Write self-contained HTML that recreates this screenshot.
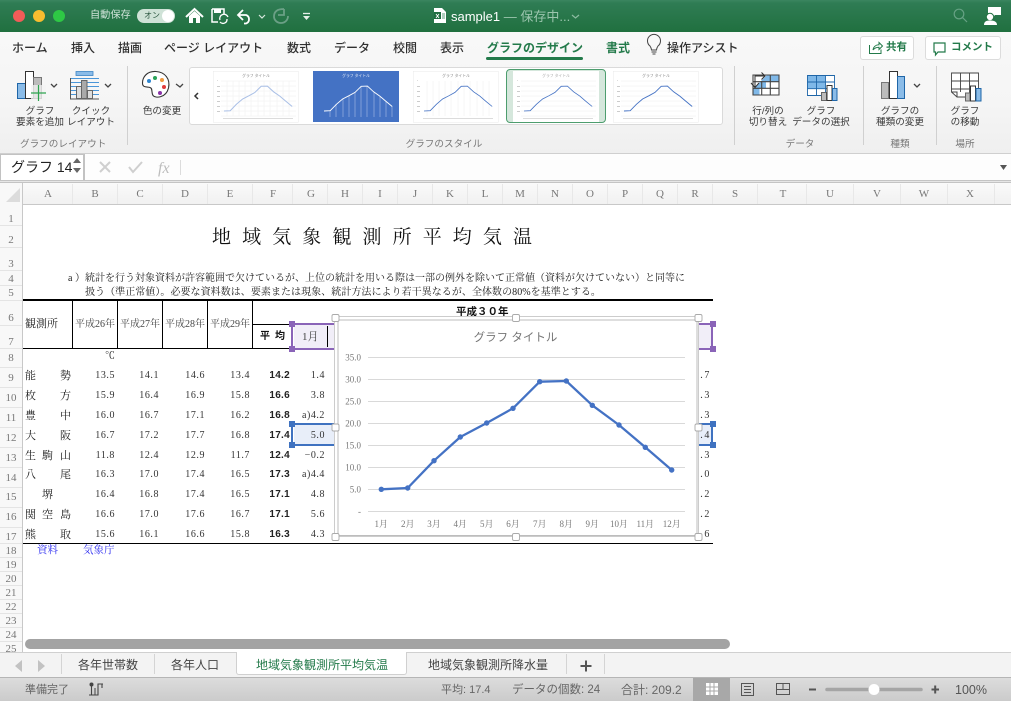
<!DOCTYPE html>
<html lang="ja"><head><meta charset="utf-8"><title>sample1</title>
<style>
*{box-sizing:border-box}
html,body{margin:0;padding:0;background:#fff}
#p{position:relative;width:1011px;height:701px;overflow:hidden;font-family:"Liberation Sans","Noto Sans CJK JP",sans-serif;color:#333}
#p div,#p span.a{position:absolute;white-space:nowrap}
.bg{left:0;width:1011px}
.t{top:40px;font-size:12px;line-height:17px;color:#303030;font-weight:500}
.l{font-size:9.6px;line-height:11.5px;text-align:center;color:#3a3a3a}
.g{top:139px;font-size:9.6px;line-height:12px;color:#777;text-align:center}
.ch{top:187px;height:14px;font:11px/14px "Liberation Serif","Noto Serif CJK SC",serif;color:#777;text-align:center;width:30px}
.rh{left:0;width:22px;height:14px;font:11px/14px "Liberation Serif","Noto Serif CJK SC",serif;color:#777;text-align:center}
.rl{left:0;width:22px;height:1px;background:#e4e4e4}
.s{font-family:"Liberation Serif","Noto Serif CJK SC",serif;color:#222}
.r{left:0;width:1011px;height:14px;font:10px/14px "Liberation Serif","Noto Serif CJK SC",serif;color:#333}
.r b,.r i,.r u{position:absolute;font-style:normal;font-weight:normal;text-decoration:none;top:0;text-align:right;letter-spacing:.55px}
.r u{font-size:11px;letter-spacing:0;color:#222}
.r b{font:bold 10px/14px "Liberation Sans",sans-serif;letter-spacing:.3px;right:721px;color:#222}
.c2{right:896px}.c3{right:852px}.c4{right:806px}.c5{right:761px}.c7{right:686px}
.r i.c8{right:300px;letter-spacing:1.6px}
.st{font-size:11.5px;line-height:14px;color:#666;top:683px}
.tb{top:658px;font-size:12px;line-height:15px;color:#444}
</style></head><body><div id="p">

<!-- title bar -->
<div class="bg" style="top:0;height:32px;background:linear-gradient(#3b8560 0,#2f7c54 3px,#20703f 100%)"></div>
<!-- ribbon -->
<div class="bg" style="top:32px;height:121px;background:linear-gradient(#f8f8f8,#f5f5f5 60%,#efefef)"></div>
<div class="bg" style="top:153px;height:1px;background:#cfcfcf"></div>
<!-- formula bar -->
<div class="bg" style="top:154px;height:27px;background:#fdfdfd"></div>
<div class="bg" style="top:180px;height:3px;background:#e6e6e6;border-top:1px solid #c4c4c4;border-bottom:1px solid #c4c4c4"></div>
<div style="left:0;top:154px;width:85px;height:26px;background:#fff;border:1px solid #c2c2c2;border-width:1px 2px 0 1px"></div>
<div style="left:11px;top:159px;font-size:14px;line-height:17px;color:#222">グラフ 14</div>
<!-- col header -->
<div class="bg" style="top:183px;height:22px;background:linear-gradient(#fafafa,#f1f1f1);border-bottom:1px solid #c8c8c8"></div>
<div style="left:0;top:183px;width:23px;height:469px;background:#f8f8f8;border-right:1px solid #c8c8c8"></div>

<!-- title bar text -->
<div style="left:90px;top:9px;font-size:10.2px;line-height:14px;color:#cfe3d8">自動保存</div>
<div style="left:137px;top:9px;width:38px;height:14px;border-radius:7px;background:#cfe2d7"></div>
<div style="left:144px;top:10px;font-size:8px;line-height:12px;color:#27543d">オン</div>
<div style="left:451px;top:8px;font-size:13px;line-height:17px;color:#fff">sample1<span style="color:#9cc5ae"> — 保存中...</span></div>

<!-- tabs -->
<div class="t" style="left:12px">ホーム</div>
<div class="t" style="left:71px">挿入</div>
<div class="t" style="left:118px">描画</div>
<div class="t" style="left:164px">ページ レイアウト</div>
<div class="t" style="left:287px">数式</div>
<div class="t" style="left:334px">データ</div>
<div class="t" style="left:393px">校閲</div>
<div class="t" style="left:440px">表示</div>
<div class="t" style="left:487px;color:#237a4a;font-weight:700">グラフのデザイン</div>
<div style="left:486px;top:57px;width:97px;height:3px;border-radius:2px;background:#237a4a"></div>
<div class="t" style="left:606px;color:#237a4a;font-weight:700">書式</div>
<div class="t" style="left:667px">操作アシスト</div>
<div style="left:860px;top:36px;width:54px;height:24px;background:#fff;border:1px solid #dcdcdc;border-radius:3px"></div>
<div style="left:925px;top:36px;width:76px;height:24px;background:#fff;border:1px solid #dcdcdc;border-radius:3px"></div>
<div style="left:886px;top:40px;font-size:10.5px;line-height:15px;font-weight:700;color:#237a4a">共有</div>
<div style="left:951px;top:40px;font-size:10.5px;line-height:15px;font-weight:700;color:#237a4a">コメント</div>

<!-- gallery -->
<div style="left:189px;top:67px;width:534px;height:58px;background:#fff;border:1px solid #dadada;border-radius:3px"></div>
<div style="left:506px;top:69px;width:100px;height:54px;background:#d5e7dc;border:1.5px solid #4d9d6e;border-radius:4px"></div>

<!-- ribbon labels -->
<div class="l" style="left:10px;top:105.500px;width:60px">グラフ<br>要素を追加</div>
<div class="l" style="left:60px;top:105.500px;width:62px">クイック<br>レイアウト</div>
<div class="l" style="left:132px;top:105.500px;width:60px">色の変更</div>
<div class="l" style="left:738px;top:105.500px;width:60px">行/列の<br>切り替え</div>
<div class="l" style="left:790px;top:105.500px;width:62px">グラフ<br>データの選択</div>
<div class="l" style="left:868px;top:105.500px;width:64px">グラフの<br>種類の変更</div>
<div class="l" style="left:940px;top:105.500px;width:50px">グラフ<br>の移動</div>
<div class="g" style="left:20px;width:70px">グラフのレイアウト</div>
<div class="g" style="left:404px;width:80px">グラフのスタイル</div>
<div class="g" style="left:785px;width:30px">データ</div>
<div class="g" style="left:885px;width:30px">種類</div>
<div class="g" style="left:950px;width:30px">場所</div>

<!-- column headers -->
<div class="ch" style="left:33px">A</div><div class="ch" style="left:80px">B</div><div class="ch" style="left:125px">C</div><div class="ch" style="left:170px">D</div><div class="ch" style="left:215px">E</div><div class="ch" style="left:258px">F</div><div class="ch" style="left:296px">G</div><div class="ch" style="left:330px">H</div><div class="ch" style="left:365px">I</div><div class="ch" style="left:400px">J</div><div class="ch" style="left:435px">K</div><div class="ch" style="left:470px">L</div><div class="ch" style="left:505px">M</div><div class="ch" style="left:540px">N</div><div class="ch" style="left:575px">O</div><div class="ch" style="left:610px">P</div><div class="ch" style="left:645px">Q</div><div class="ch" style="left:680px">R</div><div class="ch" style="left:720px">S</div><div class="ch" style="left:768px">T</div><div class="ch" style="left:815px">U</div><div class="ch" style="left:862px">V</div><div class="ch" style="left:909px">W</div><div class="ch" style="left:955px">X</div>

<!-- row headers -->
<div class="rh" style="top:212px">1</div><div class="rh" style="top:233px">2</div><div class="rh" style="top:257px">3</div><div class="rh" style="top:272px">4</div><div class="rh" style="top:286px">5</div><div class="rh" style="top:311px">6</div><div class="rh" style="top:335px">7</div><div class="rh" style="top:351px">8</div><div class="rh" style="top:371px">9</div><div class="rh" style="top:391px">10</div><div class="rh" style="top:411px">11</div><div class="rh" style="top:431px">12</div><div class="rh" style="top:451px">13</div><div class="rh" style="top:471px">14</div><div class="rh" style="top:490px">15</div><div class="rh" style="top:510px">16</div><div class="rh" style="top:530px">17</div><div class="rh" style="top:544px">18</div><div class="rh" style="top:558px">19</div><div class="rh" style="top:572px">20</div><div class="rh" style="top:586px">21</div><div class="rh" style="top:600px">22</div><div class="rh" style="top:614px">23</div><div class="rh" style="top:628px">24</div><div class="rh" style="top:642px">25</div>
<div class="rl" style="top:225px"></div><div class="rl" style="top:247px"></div><div class="rl" style="top:270px"></div><div class="rl" style="top:285px"></div><div class="rl" style="top:300px"></div><div class="rl" style="top:325px"></div><div class="rl" style="top:348px"></div><div class="rl" style="top:367px"></div><div class="rl" style="top:387px"></div><div class="rl" style="top:407px"></div><div class="rl" style="top:427px"></div><div class="rl" style="top:447px"></div><div class="rl" style="top:467px"></div><div class="rl" style="top:487px"></div><div class="rl" style="top:507px"></div><div class="rl" style="top:527px"></div><div class="rl" style="top:543px"></div><div class="rl" style="top:557px"></div><div class="rl" style="top:571px"></div><div class="rl" style="top:585px"></div><div class="rl" style="top:599px"></div><div class="rl" style="top:613px"></div><div class="rl" style="top:627px"></div><div class="rl" style="top:641px"></div>

<!-- sheet text -->
<div class="s" style="left:212px;top:225px;font-size:19px;line-height:25px;letter-spacing:11.100px;color:#111">地域気象観測所平均気温</div>
<div class="s" style="left:68px;top:272px;font-size:10px;line-height:14px">a ）統計を行う対象資料が許容範囲で欠けているが、上位の統計を用いる際は一部の例外を除いて正常値（資料が欠けていない）と同等に</div>
<div class="s" style="left:85px;top:286px;font-size:10px;line-height:14px;letter-spacing:.05px">扱う（準正常値）。必要な資料数は、要素または現象、統計方法により若干異なるが、全体数の80%を基準とする。</div>
<!-- table lines -->
<div style="left:23px;top:299px;width:690px;height:2px;background:#000"></div>
<div style="left:23px;top:348px;width:270px;height:1px;background:#000"></div>
<div style="left:23px;top:543px;width:690px;height:1px;background:#000"></div>
<div style="left:72px;top:300px;width:1px;height:48px;background:#000"></div>
<div style="left:117px;top:300px;width:1px;height:48px;background:#000"></div>
<div style="left:162px;top:300px;width:1px;height:48px;background:#000"></div>
<div style="left:207px;top:300px;width:1px;height:48px;background:#000"></div>
<div style="left:252px;top:300px;width:1px;height:48px;background:#000"></div>
<div style="left:253px;top:324px;width:40px;height:1px;background:#000"></div>
<div class="s" style="left:25px;top:317px;font-size:11px;line-height:14px">観測所</div>
<div class="s" style="left:75px;top:318px;width:42px;overflow:hidden;font-size:10px;line-height:14px;color:#444">平成26年</div>
<div class="s" style="left:120px;top:318px;width:42px;overflow:hidden;font-size:10px;line-height:14px;color:#444">平成27年</div>
<div class="s" style="left:165px;top:318px;width:42px;overflow:hidden;font-size:10px;line-height:14px;color:#444">平成28年</div>
<div class="s" style="left:210px;top:318px;width:42px;overflow:hidden;font-size:10px;line-height:14px;color:#444">平成29年</div>
<div style="left:456px;top:305px;font-size:10.5px;line-height:14px;font-weight:700;color:#111">平成３０年</div>
<div style="left:260px;top:330px;font-size:10px;line-height:14px;font-weight:700;color:#111;letter-spacing:5px">平均</div>
<div class="s" style="left:105px;top:350px;font-size:10px;line-height:14px">℃</div>

<!-- selection ranges -->
<div style="left:294px;top:325px;width:417px;height:23px;background:#f1eef8"></div>
<div style="left:292px;top:323px;width:422px;height:2px;background:#8a64b8"></div>
<div style="left:292px;top:348px;width:422px;height:2px;background:#8a64b8"></div>
<div style="left:291px;top:327px;width:2px;height:19px;background:#8a64b8"></div>
<div style="left:711px;top:327px;width:2px;height:19px;background:#8a64b8"></div>
<div style="left:327px;top:326px;width:1px;height:21px;background:#000"></div>
<div class="s" style="left:302px;top:330px;font-size:11px;line-height:14px;color:#444">1月</div>
<div style="left:294px;top:425px;width:417px;height:19px;background:#e8eef9"></div>
<div style="left:292px;top:423px;width:422px;height:2px;background:#3f72c0"></div>
<div style="left:292px;top:444px;width:422px;height:2px;background:#3f72c0"></div>
<div style="left:291px;top:427px;width:2px;height:15px;background:#3f72c0"></div>
<div style="left:711px;top:427px;width:2px;height:15px;background:#3f72c0"></div>
<div style="left:289px;top:321px;width:6px;height:6px;background:#8a64b8"></div>
<div style="left:289px;top:346px;width:6px;height:6px;background:#8a64b8"></div>
<div style="left:710px;top:321px;width:6px;height:6px;background:#8a64b8"></div>
<div style="left:710px;top:346px;width:6px;height:6px;background:#8a64b8"></div>
<div style="left:289px;top:421px;width:6px;height:6px;background:#3f72c0"></div>
<div style="left:289px;top:442px;width:6px;height:6px;background:#3f72c0"></div>
<div style="left:710px;top:421px;width:6px;height:6px;background:#3f72c0"></div>
<div style="left:710px;top:442px;width:6px;height:6px;background:#3f72c0"></div>

<!-- data rows -->
<div class="r" style="top:369px"><u style="left:25px">能</u><u style="left:60px">勢</u><i class="c2">13.5</i><i class="c3">14.1</i><i class="c4">14.6</i><i class="c5">13.4</i><b>14.2</b><i class="c7">1.4</i><i class="c8">14.7</i></div>
<div class="r" style="top:389px"><u style="left:25px">枚</u><u style="left:60px">方</u><i class="c2">15.9</i><i class="c3">16.4</i><i class="c4">16.9</i><i class="c5">15.8</i><b>16.6</b><i class="c7">3.8</i><i class="c8">16.3</i></div>
<div class="r" style="top:409px"><u style="left:25px">豊</u><u style="left:60px">中</u><i class="c2">16.0</i><i class="c3">16.7</i><i class="c4">17.1</i><i class="c5">16.2</i><b>16.8</b><i class="c7">a)4.2</i><i class="c8">16.3</i></div>
<div class="r" style="top:429px"><u style="left:25px">大</u><u style="left:60px">阪</u><i class="c2">16.7</i><i class="c3">17.2</i><i class="c4">17.7</i><i class="c5">16.8</i><b>17.4</b><i class="c7">5.0</i><i class="c8">17.4</i></div>
<div class="r" style="top:449px"><u style="left:25px">生</u><u style="left:42px">駒</u><u style="left:60px">山</u><i class="c2">11.8</i><i class="c3">12.4</i><i class="c4">12.9</i><i class="c5">11.7</i><b>12.4</b><i class="c7">−0.2</i><i class="c8">12.3</i></div>
<div class="r" style="top:468px"><u style="left:25px">八</u><u style="left:60px">尾</u><i class="c2">16.3</i><i class="c3">17.0</i><i class="c4">17.4</i><i class="c5">16.5</i><b>17.3</b><i class="c7">a)4.4</i><i class="c8">17.0</i></div>
<div class="r" style="top:488px"><u style="left:42px">堺</u><i class="c2">16.4</i><i class="c3">16.8</i><i class="c4">17.4</i><i class="c5">16.5</i><b>17.1</b><i class="c7">4.8</i><i class="c8">17.2</i></div>
<div class="r" style="top:508px"><u style="left:25px">関</u><u style="left:42px">空</u><u style="left:60px">島</u><i class="c2">16.6</i><i class="c3">17.0</i><i class="c4">17.6</i><i class="c5">16.7</i><b>17.1</b><i class="c7">5.6</i><i class="c8">17.2</i></div>
<div class="r" style="top:528px"><u style="left:25px">熊</u><u style="left:60px">取</u><i class="c2">15.6</i><i class="c3">16.1</i><i class="c4">16.6</i><i class="c5">15.8</i><b>16.3</b><i class="c7">4.3</i><i class="c8">16.6</i></div>
<div class="s" style="left:37px;top:544px;font-size:10.5px;line-height:14px;color:#3030f0">資料</div>
<div class="s" style="left:83px;top:544px;font-size:10.5px;line-height:14px;color:#3030f0">気象庁</div>

<!-- scrollbar -->
<div style="left:25px;top:639px;width:705px;height:10px;border-radius:5px;background:#a3a3a3"></div>

<!-- sheet tabs -->
<div class="bg" style="top:652px;height:26px;background:#f3f3f3;border-top:1px solid #d0d0d0;border-bottom:1px solid #b5b5b5"></div>
<div style="left:236px;top:652px;width:171px;height:23px;background:#fff;border:1px solid #d0d0d0;border-top:0;border-radius:0 0 3px 3px"></div>
<div class="tb" style="left:78px">各年世帯数</div>
<div class="tb" style="left:171px">各年人口</div>
<div class="tb" style="left:256px;color:#237a4a">地域気象観測所平均気温</div>
<div class="tb" style="left:428px">地域気象観測所降水量</div>
<div style="left:61px;top:654px;width:1px;height:20px;background:#d4d4d4"></div>
<div style="left:154px;top:654px;width:1px;height:20px;background:#d4d4d4"></div>
<div style="left:566px;top:654px;width:1px;height:20px;background:#d4d4d4"></div>
<div style="left:604px;top:654px;width:1px;height:20px;background:#d4d4d4"></div>

<!-- status bar -->
<div class="bg" style="top:678px;height:23px;background:linear-gradient(#dcdcdc,#cbcbcb)"></div>
<div style="left:693px;top:678px;width:37px;height:23px;background:#a8a8a8"></div>
<div class="st" style="left:25px;font-size:11px">準備完了</div>
<div class="st" style="left:441px;font-size:11px">平均: 17.4</div>
<div class="st" style="left:512px">データの個数: 24</div>
<div class="st" style="left:621px;font-size:12px">合計: 209.2</div>
<div class="st" style="left:955px;color:#555;font-size:12.5px">100%</div>

<!-- all icons + chart + thumbnails in page coordinates -->
<svg width="1011" height="701" viewBox="0 0 1011 701" style="position:absolute;left:0;top:0">
<defs>
<polyline id="ln" fill="none" points="11,40 17.2,39.7 23.4,33.3 29.6,28 35.8,24.8 42,21.4 48.2,15.3 54.4,15.1 60.6,20.8 66.8,25.1 73,30.4 79.2,35.5"/>
<g id="axl" fill="#aaa">
<rect x="4" y="9.5" width="1" height=".4"/><rect x="4" y="15" width="3" height=".6"/><rect x="4" y="20" width="3" height=".6"/><rect x="4" y="25" width="3" height=".6"/><rect x="4" y="30" width="3" height=".6"/><rect x="4" y="35" width="3" height=".6"/><rect x="4" y="40" width="3" height=".6"/>
<rect x="10" y="47" width="70" height=".7" opacity=".6"/>
</g>
<g id="hg" stroke="#eeeeee" stroke-width=".5"><path d="M8 10H83M8 15H83M8 20H83M8 25H83M8 30H83M8 35H83M8 40H83M8 45H83"/></g>
<g id="vg" stroke="#eeeeee" stroke-width=".5"><path d="M14 10V45M20 10V45M26 10V45M32 10V45M38 10V45M45 10V45M51 10V45M57 10V45M64 10V45M70 10V45M76 10V45"/></g>
</defs>

<!-- traffic lights -->
<circle cx="19" cy="16" r="6" fill="#f15c58"/><circle cx="39" cy="16" r="6" fill="#f8bd2f"/><circle cx="59" cy="16" r="6" fill="#2ec845"/>
<circle cx="168" cy="16" r="6" fill="#fff"/>
<!-- home -->
<path d="M186 17L194.500 9 203 17" fill="none" stroke="#fff" stroke-width="2"/>
<path d="M189 16V23H193V18H196V23H200V16L194.500 11Z" fill="#fff"/>
<!-- save sync -->
<path d="M212 9H224V14M212 9V22H218" fill="none" stroke="#fff" stroke-width="1.500"/>
<rect x="214" y="9" width="7" height="4" fill="#fff"/>
<path d="M220 20A4 4 0 0 1 228 17M227 19A4 4 0 0 1 220 22" fill="none" stroke="#fff" stroke-width="1.300"/>
<!-- undo -->
<path d="M243 10L238 15 243 20M238 15H246A4.500 4.500 0 0 1 246 23.500H244" fill="none" stroke="#fff" stroke-width="1.800"/>
<path d="M259 15L262 18 265 15" fill="none" stroke="#d8e8de" stroke-width="1.200"/>
<!-- redo -->
<path d="M284 10V16H278M284 10C277 10 274 13 274 17.500 274 21 277 24 281 24 285 24 288 21 288 17" fill="none" stroke="#6ba086" stroke-width="1.800" transform="translate(0,-1)"/>
<!-- qat -->
<path d="M303 13.500H310" stroke="#e6efe9" stroke-width="1.300"/><path d="M303 16H310L306.500 20Z" fill="#e6efe9"/>
<!-- doc icon -->
<path d="M434 8H442L446 12V23H434Z" fill="#fff"/><rect x="434" y="12" width="7" height="7" fill="#1f6e41"/><path d="M436 14L439 18M439 14L436 18" stroke="#fff" stroke-width=".9"/><path d="M442 14H445M442 16H445M442 18H445" stroke="#2f7c54" stroke-width=".7"/>
<path d="M572 15L575.500 18 579 15" fill="none" stroke="#8cbba1" stroke-width="1.200"/>
<!-- search -->
<circle cx="959" cy="14" r="4.800" fill="none" stroke="#66a184" stroke-width="1.200"/><path d="M962.500 17.500L967 22" stroke="#66a184" stroke-width="1.200"/>
<!-- person -->
<path d="M988 7H1001V15H995L992 18V14H988Z" fill="#fff"/><circle cx="990" cy="17" r="3.700" fill="#fff" stroke="#20703f"/><path d="M984 25C984 21 987 20.500 990 20.500 993 20.500 997 21 997 25Z" fill="#fff"/>

<!-- bulb -->
<path d="M650 46A6.500 6.500 0 1 1 658 46C657 47.500 656.500 48.500 656.500 50H651.500C651.500 48.500 651 47.500 650 46ZM651.500 52H656.500M652.500 54H655.500" fill="none" stroke="#444" stroke-width="1"/>
<!-- share -->
<path d="M869.500 45V53.500H881V49.500M873 50C873.500 46.500 876 44.800 879 44.800V42.500L882.500 46 879 49.500V47.200C876.500 47.200 874.500 48 873 50Z" fill="none" stroke="#237a4a" stroke-width="1"/>
<!-- comment -->
<path d="M934 43H945V52H938L935.500 55V52H934Z" fill="none" stroke="#237a4a" stroke-width="1.200"/>

<!-- ribbon separators -->
<path d="M127.500 66V145M734.500 66V145M863.500 66V145M936.500 66V145" stroke="#d0d0d0"/>

<!-- chart add -->
<rect x="17.500" y="83.500" width="9" height="15" fill="#8bbce8" stroke="#1f66a8"/>
<rect x="25.500" y="71.500" width="8" height="27" fill="#fff" stroke="#333"/>
<rect x="33.500" y="77.500" width="8" height="21" fill="#bcbcbc" stroke="#777"/>
<rect x="31" y="85" width="15" height="16" fill="#f3f3f3" opacity=".75"/>
<path d="M38.500 85V101M31 93H46" stroke="#2ea44f" stroke-width="1.200"/>
<path d="M51 84L54 87 57 84M105 84L108 87 111 84M176 84L180 87 183 84" fill="none" stroke="#444" stroke-width="1.300"/>
<!-- quick layout -->
<rect x="76" y="71.500" width="17" height="4" fill="#8bbce8" stroke="#3d84c4" stroke-width=".8"/>
<path d="M71 78.500H99M71 82.500H99M71 86.500H99M71 90.500H99M71 94.500H99" stroke="#4a96d8" stroke-width="1"/>
<path d="M70.500 78V99H99" fill="none" stroke="#555"/>
<rect x="76.500" y="86.500" width="5" height="12" fill="#ddd" stroke="#666"/><rect x="81.500" y="80.500" width="5.500" height="18" fill="#aaa" stroke="#666"/><rect x="87.500" y="90.500" width="5" height="8" fill="#ddd" stroke="#666"/>
<!-- palette -->
<path d="M156 71.500C147 71 142.500 77 142.500 83 142.500 88 147 86.500 150 87.500 153 88.500 151 92 153 95.500 155.500 98.500 166 98 168.500 88 170.500 79 165 72 156 71.500Z" fill="#fff" stroke="#333" stroke-width="1.100"/>
<circle cx="149" cy="81" r="2" fill="#2f86cf"/><circle cx="155" cy="78" r="2" fill="#2aa35a"/><circle cx="162" cy="80" r="2" fill="#f09a3e"/><circle cx="164" cy="87" r="2" fill="#e23b3b"/><circle cx="160" cy="93" r="2" fill="#8a34a8"/>
<path d="M198 93L195 96 198 99" fill="none" stroke="#333" stroke-width="1.500"/>

<!-- thumbnails -->
<g transform="translate(213,71)"><rect x=".25" y=".25" width="85" height="51" fill="#fff" stroke="#e8e8e8" stroke-width=".5"/><use href="#hg"/><use href="#vg"/><use href="#axl"/><use href="#ln" stroke="#a9bfe6" stroke-width="1"/><text x="43" y="6" font-size="3.800" text-anchor="middle" fill="#888">グラフ タイトル</text></g>
<g transform="translate(313,71)"><rect width="86" height="51" fill="#4472c4"/><path d="M17 39V46M23 33V46M30 28V46M36 25V46M42 21V46M48 15V46M54 15V46M61 21V46M67 25V46M73 30V46M79 35V46" stroke="#a8bde6" stroke-width=".6"/><use href="#ln" stroke="#fff" stroke-width=".9"/><text x="43" y="6" font-size="3.800" text-anchor="middle" fill="#e4ebf7">グラフ タイトル</text></g>
<g transform="translate(413,71)"><rect x=".25" y=".25" width="85" height="51" fill="#fff" stroke="#e8e8e8" stroke-width=".5"/><use href="#vg"/><use href="#axl"/><use href="#ln" stroke="#4472c4" stroke-width=".8"/><text x="43" y="6" font-size="3.800" text-anchor="middle" fill="#888">グラフ タイトル</text></g>
<g transform="translate(513,71)"><rect width="86" height="51" fill="#fff"/><use href="#hg"/><use href="#axl"/><use href="#ln" stroke="#4472c4" stroke-width=".8"/><text x="43" y="6" font-size="3.800" text-anchor="middle" fill="#aaa">グラフ タイトル</text></g>
<g transform="translate(613,71)"><rect x=".25" y=".25" width="85" height="51" fill="#fff" stroke="#e8e8e8" stroke-width=".5"/><use href="#hg"/><use href="#axl"/><use href="#ln" stroke="#4472c4" stroke-width=".9"/><text x="43" y="6" font-size="3.800" text-anchor="middle" fill="#888">グラフ タイトル</text></g>

<!-- switch row/col -->
<rect x="753" y="75" width="26" height="20" fill="#fff"/>
<path d="M753 89L767 75H779V81.500H766V88H753ZM753 88.500H759.500V95H753Z" fill="#7fb8e8"/>
<path d="M753 75H779V95H753ZM753 81.700H779M753 88.300H779M761.700 81V95M770.300 75V95" fill="none" stroke="#444" stroke-width="1.100"/>
<path d="M751 83L755 87.500 759 83M755 87V76H765M761.500 72.500L765 76 761.500 79.500" fill="none" stroke="#333" stroke-width="1"/>
<!-- select data -->
<rect x="807" y="75" width="27" height="20" fill="#fff"/><rect x="807" y="75" width="18" height="14" fill="#7fb8e8"/>
<path d="M807.500 75.500H834.500V95.500H807.500ZM807.500 82H834.500M807.500 88.700H834.500M816.500 75V95M825.500 75V95" fill="none" stroke="#1f66a8" stroke-width=".9"/>
<rect x="821.500" y="92.500" width="5" height="8" fill="#bcbcbc" stroke="#666"/><rect x="827" y="85.500" width="5" height="15" fill="#fff" stroke="#333"/><rect x="832.500" y="88.500" width="4.500" height="12" fill="#8bbce8" stroke="#1f66a8"/>
<!-- chart type -->
<rect x="881.500" y="82.500" width="7" height="16" fill="#bcbcbc" stroke="#777"/><rect x="889.500" y="71.500" width="8" height="27" fill="#fff" stroke="#333"/><rect x="897.500" y="76.500" width="7" height="22" fill="#8bbce8" stroke="#1f66a8"/>
<path d="M914 84L917 87 920 84" fill="none" stroke="#444" stroke-width="1.300"/>
<!-- move chart -->
<path d="M951.500 73H978.500V97H957L951.500 92ZM951.500 81H978.500M951.500 89H978.500M960.500 73V92M969.500 73V97" fill="#fff" stroke="#444" stroke-width=".9"/>
<path d="M951.500 92H957V97" fill="none" stroke="#444"/>
<rect x="965.500" y="93" width="4.500" height="8" fill="#bcbcbc" stroke="#666"/><rect x="970.500" y="86" width="5" height="15" fill="#fff" stroke="#333"/><rect x="976" y="88.500" width="5" height="12.500" fill="#8bbce8" stroke="#1f66a8"/>

<!-- name box arrows, fx -->
<path d="M77 158L73 163H81ZM73 168H81L77 173Z" fill="#666"/>
<path d="M100 162L110 172M110 162L100 172" stroke="#cfcfcf" stroke-width="2"/>
<path d="M129 167L133 172 142 162" fill="none" stroke="#cfcfcf" stroke-width="2"/>
<text x="158" y="173" font-size="16" font-style="italic" font-family="Liberation Serif,serif" fill="#bdbdbd">fx</text>
<path d="M180.500 160V175" stroke="#dcdcdc"/>
<path d="M1000 165H1007L1003.500 170Z" fill="#555"/>
<!-- corner, header ticks -->
<path d="M20 188V202H6Z" fill="#dcdcdc"/>
<path d="M72.500 184V204M117.500 184V204M162.500 184V204M207.500 184V204M252.500 184V204M292.500 184V204M327.500 184V204M362.500 184V204M397.500 184V204M432.500 184V204M467.500 184V204M502.500 184V204M537.500 184V204M572.500 184V204M607.500 184V204M642.500 184V204M677.500 184V204M712.500 184V204M757.500 184V204M806.500 184V204M853.500 184V204M900.500 184V204M947.500 184V204M994.500 184V204" stroke="#e8e8e8"/>

<!-- chart -->
<rect x="335" y="317" width="364" height="220" fill="#fff"/>
<rect x="338" y="320" width="359" height="215.500" fill="none" stroke="#bdbdbd" stroke-width="1"/>
<rect x="334.500" y="316.500" width="364" height="220" fill="none" stroke="#cccccc" stroke-width="1"/>
<path d="M368 357.500H685M368 379.500H685M368 401.500H685M368 423.500H685M368 445.500H685M368 467.500H685M368 489.500H685M368 511.500H685" stroke="#d9d9d9" stroke-width="1"/>
<text x="515.500" y="341" font-size="11.500" text-anchor="middle" fill="#757575" font-family="Liberation Sans,Noto Sans CJK JP,sans-serif">グラフ タイトル</text>
<g font-size="9" fill="#777" text-anchor="end" font-family="Liberation Serif,Noto Serif CJK SC,serif"><text x="361" y="360.500">35.0</text><text x="361" y="382.500">30.0</text><text x="361" y="404.500">25.0</text><text x="361" y="426.500">20.0</text><text x="361" y="448.500">15.0</text><text x="361" y="470.500">10.0</text><text x="361" y="492.500">5.0</text><text x="361" y="514.500">-</text></g>
<g font-size="9" fill="#777" text-anchor="middle" font-family="Liberation Serif,Noto Serif CJK SC,serif"><text x="381.300" y="527">1月</text><text x="407.700" y="527">2月</text><text x="434" y="527">3月</text><text x="460.300" y="527">4月</text><text x="486.700" y="527">5月</text><text x="513" y="527">6月</text><text x="539.700" y="527">7月</text><text x="566.300" y="527">8月</text><text x="592.300" y="527">9月</text><text x="619" y="527">10月</text><text x="645.300" y="527">11月</text><text x="671.700" y="527">12月</text></g>
<polyline fill="none" stroke="#4472c4" stroke-width="2.300" stroke-linejoin="round" points="381.300,489.300 407.700,488 434,460.700 460.300,437 486.700,423 513,408.300 539.700,381.700 566.300,381 592.300,405.300 619,425 645.300,447.300 671.700,470"/>
<g fill="#4472c4"><circle cx="381.300" cy="489.300" r="2.700"/><circle cx="407.700" cy="488" r="2.700"/><circle cx="434" cy="460.700" r="2.700"/><circle cx="460.300" cy="437" r="2.700"/><circle cx="486.700" cy="423" r="2.700"/><circle cx="513" cy="408.300" r="2.700"/><circle cx="539.700" cy="381.700" r="2.700"/><circle cx="566.300" cy="381" r="2.700"/><circle cx="592.300" cy="405.300" r="2.700"/><circle cx="619" cy="425" r="2.700"/><circle cx="645.300" cy="447.300" r="2.700"/><circle cx="671.700" cy="470" r="2.700"/></g>
<g fill="#fff" stroke="#aaa" stroke-width=".9"><rect x="332" y="314.500" width="7" height="7" rx="1.500"/><rect x="512.500" y="314.500" width="7" height="7" rx="1.500"/><rect x="695" y="314.500" width="7" height="7" rx="1.500"/><rect x="332" y="424" width="7" height="7" rx="1.500"/><rect x="695" y="424" width="7" height="7" rx="1.500"/><rect x="332" y="533.500" width="7" height="7" rx="1.500"/><rect x="512.500" y="533.500" width="7" height="7" rx="1.500"/><rect x="695" y="533.500" width="7" height="7" rx="1.500"/></g>

<!-- tab nav -->
<path d="M22 660L15 666 22 672ZM38 660L45 666 38 672Z" fill="#c2c2c2"/>
<path d="M586 660.500V671.500M580.500 666H591.500" stroke="#555" stroke-width="2"/>
<!-- status icons -->
<circle cx="91.500" cy="684.500" r="2" fill="#444"/><path d="M91.500 686V695M89 695H98V684H103M102 684V688" fill="none" stroke="#444" stroke-width="1.100"/><path d="M95 688V695" stroke="#444" stroke-width="1"/>
<rect x="706" y="683" width="12" height="12" fill="#fff"/>
<path d="M706 687H718M706 691H718M710 683V695M714 683V695" stroke="#a8a8a8" stroke-width="1"/>
<path d="M741.500 683.500H753.500V695.500H741.500ZM744 686.500H751M744 689.500H751M744 692.500H751" fill="none" stroke="#555" stroke-width="1"/>
<path d="M776.500 683.500H789.500V694.500H776.500ZM783 683.500V689.500H776.500M783 689.500H789.500" fill="none" stroke="#555" stroke-width="1"/>
<path d="M809 689.500H816" stroke="#555" stroke-width="2"/>
<path d="M827 689.500H921" stroke="#a5a5a5" stroke-width="3.500" stroke-linecap="round"/>
<circle cx="874" cy="689.500" r="5.500" fill="#fff"/>
<path d="M931.500 689.500H939M935.200 685.500V693.500" stroke="#555" stroke-width="2"/>
</svg>
</div></body></html>
